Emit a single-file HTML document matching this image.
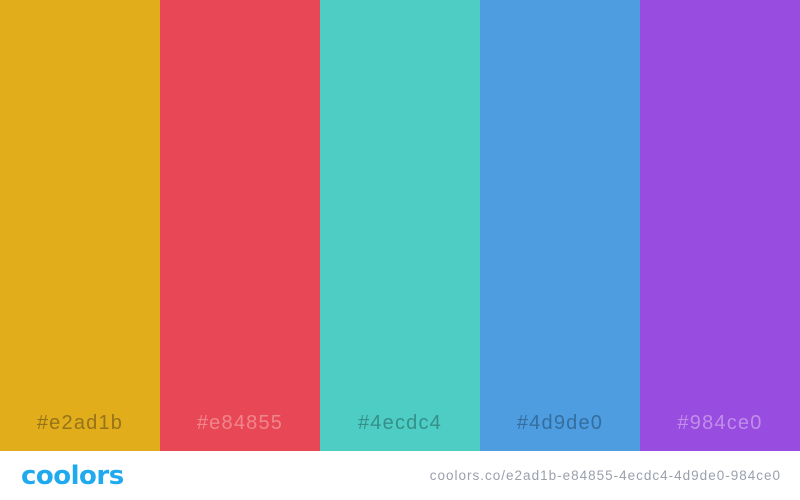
<!DOCTYPE html>
<html><head><style>
body{margin:0;width:800px;height:500px;background:#fff;font-family:"Liberation Sans",sans-serif;position:relative;overflow:hidden}
.c{position:absolute;top:0;width:160px;height:451px}
.c span{position:absolute;left:0;right:0;top:410px;text-align:center;font-size:20px;line-height:26px;letter-spacing:1.2px}
.logo{position:absolute;left:21px;top:460px;font-size:26px;font-weight:bold;color:#1fa9ef;letter-spacing:-0.5px;font-family:"DejaVu Sans",sans-serif;line-height:32px}
.url{position:absolute;right:19px;top:467px;font-size:13.5px;color:#9aa0ac;line-height:18px;letter-spacing:1px}
</style></head><body>
<div class="c" style="left:0;background:#e2ad1b"><span style="color:#957319">#e2ad1b</span></div>
<div class="c" style="left:160px;background:#e84855"><span style="color:#f0858e">#e84855</span></div>
<div class="c" style="left:320px;background:#4ecdc4"><span style="color:#35908a">#4ecdc4</span></div>
<div class="c" style="left:480px;background:#4d9de0"><span style="color:#356e9e">#4d9de0</span></div>
<div class="c" style="left:640px;background:#984ce0"><span style="color:#c08ee9">#984ce0</span></div>
<div class="logo">coolors</div>
<div class="url">coolors.co/e2ad1b-e84855-4ecdc4-4d9de0-984ce0</div>
</body></html>
